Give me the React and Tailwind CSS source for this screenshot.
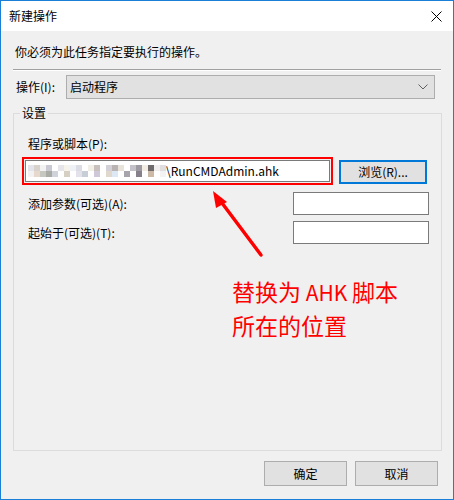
import React from "react";

const mosaic = [
  ["#e4e4ec", "#d8d2cc", "#f2f2f2", "#c9c9d3", "#ffffff", "#e6e6ea", "#f6f4ea", "#eef2f6", "#dcdce4", "#ffffff", "#f2efe6", "#c8c0bc", "#ffffff", "#d4d0d8", "#b9b3b3", "#e7e2da", "#ffffff", "#c5c1c8", "#9e9aa1", "#f3ece2", "#6f6a6c", "#f0eeee", "#e0ddde"],
  ["#f2f2f2", "#e6d8cc", "#c7c7c2", "#a8aca4", "#d0d4da", "#ffffff", "#d6d0c4", "#ffffff", "#e3e1ea", "#c8ced6", "#ffffff", "#cfc8d8", "#ffffff", "#e0d8cc", "#dce8f4", "#ffffff", "#a7a4ab", "#ffffff", "#85808a", "#ffffff", "#cdbaa6", "#ffffff", "#f3f3f3"],
];

function Field({ className }) {
  return <div className={`h-[23px] w-[136px] border border-[#7a7a7a] bg-white ${className || ""}`} />;
}

export default function App() {
  return (
    <div
      className="relative flex h-[500px] w-[454px] flex-col border border-[#1a7fd6] bg-[#f0f0f0] text-[12px] leading-[16px] text-black"
      style={{ fontFamily: '"Noto Sans CJK SC", "Noto Sans", sans-serif' }}
    >
      {/* Title bar */}
      <div className="flex h-[30px] items-center justify-between bg-white pl-[8px] pr-[10px]">
        <span>新建操作</span>
        <svg width="11" height="11" viewBox="0 0 11 11" className="mr-[1px]">
          <path d="M0.5 0.5 L10.5 10.5 M10.5 0.5 L0.5 10.5" stroke="#000" strokeWidth="1" />
        </svg>
      </div>

      {/* Body */}
      <div className="flex flex-1 flex-col">
        <p className="ml-[14px] mt-[13px]">你必须为此任务指定要执行的操作。</p>
        <div className="ml-[12px] mr-[12px] mt-[9px] h-[2px] border-t border-[#a0a0a0] bg-white" />

        <div className="mt-[4px] flex items-center">
          <span className="ml-[15px] w-[50px]">操作(I):</span>
          <div className="flex h-[24px] w-[369px] items-center justify-between border border-[#adadad] bg-[#e1e1e1] pl-[3px] pr-[6px]">
            <span>启动程序</span>
            <svg width="10" height="6" viewBox="0 0 10 6">
              <path d="M0.5 0.5 L5 5 L9.5 0.5" fill="none" stroke="#606060" strokeWidth="1" />
            </svg>
          </div>
        </div>

        <fieldset className="ml-[12px] mt-[6px] h-[346px] w-[429px] border border-[#dcdcdc]">
          <legend className="ml-[6px] px-[2px] leading-[16px]">设置</legend>

          <p className="ml-[14px] mt-[15px]">程序或脚本(P):</p>

          <div className="mt-[5px] flex items-start">
            <div className="ml-[8px] h-[28px] w-[311px] border-2 border-[#ff0000] p-px">
              <div className="flex h-full items-center overflow-hidden border border-[#7a7a7a] bg-white pl-[2px]">
                <div className="flex flex-col">
                  {mosaic.map((row, i) => (
                    <div key={i} className="flex">
                      {row.map((c, j) => (
                        <div key={j} className="h-[6px] w-[6px]" style={{ backgroundColor: c }} />
                      ))}
                    </div>
                  ))}
                </div>
                <span className="whitespace-nowrap">\RunCMDAdmin.ahk</span>
              </div>
            </div>
            <button className="ml-[6px] mt-[3px] flex h-[24px] w-[88px] items-center justify-center border-2 border-[#0078d7] bg-[#e1e1e1]">
              浏览(R)...
            </button>
          </div>

          <div className="mt-[7px] flex items-center justify-between">
            <span className="ml-[14px]">添加参数(可选)(A):</span>
            <Field className="mr-[12px]" />
          </div>
          <div className="mt-[6px] flex items-center justify-between">
            <span className="ml-[14px]">起始于(可选)(T):</span>
            <Field className="mr-[12px]" />
          </div>
        </fieldset>

        <div className="mr-[15px] mt-[10px] flex justify-end gap-[8px]">
          <button className="flex h-[25px] w-[83px] items-center justify-center border border-[#adadad] bg-[#e1e1e1]">确定</button>
          <button className="flex h-[25px] w-[83px] items-center justify-center border border-[#adadad] bg-[#e1e1e1]">取消</button>
        </div>
      </div>

      {/* Annotation overlay */}
      <svg className="pointer-events-none absolute left-0 top-0" width="454" height="500">
        <line x1="260" y1="254" x2="218" y2="198" stroke="#ff0000" strokeWidth="3.5" strokeLinecap="round" />
        <polygon points="212,190 226,201 215,207" fill="#ff0000" />
      </svg>
      <div className="pointer-events-none absolute left-[231px] top-[274px] text-[23px] leading-[33px] text-[#ff0000]">
        <p>
          替换为<span className="text-[21px]"> AHK </span>脚本
        </p>
        <p>所在的位置</p>
      </div>
    </div>
  );
}
